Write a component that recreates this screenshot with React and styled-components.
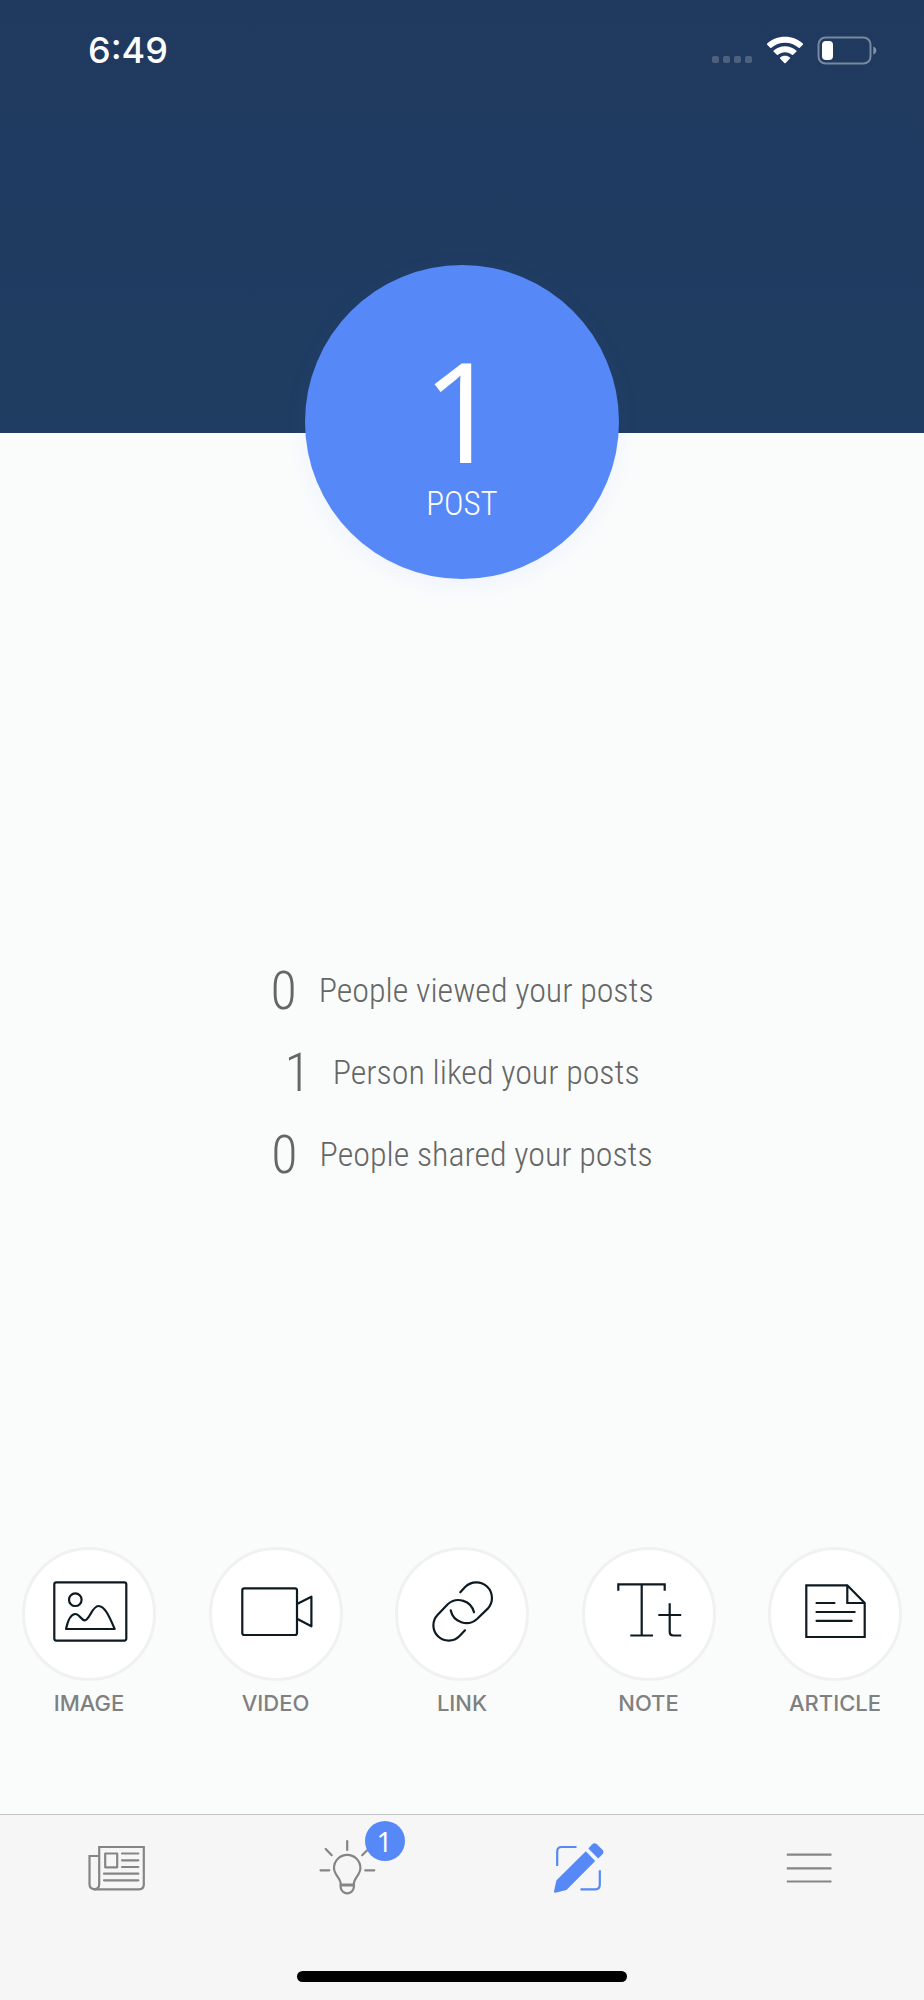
import React from 'react';
import styled, { createGlobalStyle } from 'styled-components';

const GlobalStyle = createGlobalStyle`
    body {
        margin: 0;
        background-color: #fafcfc;
    }
    * {
        box-sizing: border-box;
    }
`;

const Screen = styled.div`
    display: flex;
    flex-direction: column;
    min-height: 100vh;
    font-family: 'Roboto Condensed', 'Open Sans', sans-serif;
    color: #666;
`;

const Header = styled.header`
    height: 433px;
    padding: 30px 46px 0 88px;
    background: linear-gradient(#20395f, #1f3d62);
`;

const StatusBar = styled.div`
    display: flex;
    align-items: center;
    justify-content: space-between;
    height: 40px;
    color: #fff;
`;

const Clock = styled.time`
    font: 500 36px/40px Inter, sans-serif;
`;

const Main = styled.main`
    flex: 1;
    display: flex;
    flex-direction: column;
    align-items: center;
    margin-top: -168px;
`;

const PostCircle = styled.section`
    display: flex;
    flex-direction: column;
    align-items: center;
    width: 314px;
    height: 314px;
    padding-top: 78px;
    border-radius: 50%;
    background-color: #5689f7;
    box-shadow: 0 6px 24px rgba(86, 110, 247, 0.07);
    color: #fff;
`;

const PostCount = styled.strong`
    font: 400 140px/132px 'Open Sans', sans-serif;
`;

const PostLabel = styled.span`
    font-size: 33px;
    font-weight: 300;
    line-height: 58px;
`;

const Stats = styled.ul`
    flex: 1;
    display: flex;
    flex-direction: column;
    justify-content: center;
    margin: 0;
    padding: 18px 0 0;
    list-style: none;
`;

const Stat = styled.li`
    display: flex;
    align-items: center;
    justify-content: center;
    gap: 22px;
    height: 82px;
    font-size: 34px;
    font-weight: 350;
`;

const StatValue = styled.span`
    font-size: 54px;
`;

const Actions = styled.div`
    display: flex;
    justify-content: space-between;
    width: 100%;
    padding: 0 22px 97px;
`;

const Action = styled.button`
    display: flex;
    flex-direction: column;
    align-items: center;
    gap: 8px;
    width: 134px;
    padding: 0;
    border: 0;
    background: none;
    color: #808080;
    font: 500 22px/28px Inter, sans-serif;
    cursor: pointer;
`;

const ActionIcon = styled.span`
    width: 134px;
    height: 134px;
    border: 3px solid #f1f1f1;
    border-radius: 50%;
    background-color: #fff;
    svg {
        display: block;
        fill: none;
        stroke: #0d1a22;
        stroke-width: 2.2;
        stroke-linecap: round;
        stroke-linejoin: round;
    }
`;

const Footer = styled.footer`
    padding-bottom: 18px;
    border-top: 1px solid #c3c5c5;
    background-color: #f6f6f6;
`;

const Tabs = styled.nav`
    display: flex;
    height: 108px;
`;

const Tab = styled.button`
    flex: 1;
    display: flex;
    align-items: center;
    justify-content: center;
    padding: 0;
    border: 0;
    background: none;
    color: ${({ $active }) => ($active ? '#5689f7' : '#858585')};
    cursor: pointer;
`;

const TabIcon = styled.span`
    position: relative;
    width: 64px;
    height: 64px;
    svg {
        display: block;
        fill: none;
        stroke: currentColor;
        stroke-width: 2.2;
        stroke-linecap: round;
        stroke-linejoin: round;
    }
`;

const Badge = styled.span`
    position: absolute;
    top: -16px;
    left: 50px;
    width: 40px;
    height: 40px;
    border-radius: 50%;
    background-color: #5689f7;
    color: #fff;
    font: 400 28px/40px 'Open Sans', sans-serif;
    text-align: center;
`;

const HomeIndicator = styled.div`
    width: 330px;
    height: 11px;
    margin: 48px auto 0;
    border-radius: 6px;
    background-color: #000;
`;

const StatusIcons = () => (
    <svg width="168" height="32" viewBox="710 34 168 32" fill="#fff" aria-hidden="true">
        <g opacity="0.2">
            <rect x="712" y="56" width="7" height="7" rx="2" />
            <rect x="723" y="56" width="7" height="7" rx="2" />
            <rect x="734" y="56" width="7" height="7" rx="2" />
            <rect x="745" y="56" width="7" height="7" rx="2" />
        </g>
        <path d="M785 36.7C792 36.7 798.2 39.3 802.8 43.5Q803.4 44.2 802.8 44.8L799.8 47.8Q799.2 48.3 798.6 47.8C795 44.6 790.3 42.7 785 42.7S775 44.6 771.4 47.8Q770.8 48.3 770.2 47.8L767.2 44.8Q766.6 44.2 767.2 43.5C771.8 39.3 778 36.7 785 36.7Z" />
        <path d="M785 46.2C789.4 46.2 793.3 47.8 796.3 50.5Q796.9 51.1 796.3 51.7L793.1 54.7Q792.5 55.2 791.9 54.7C790 53.1 787.6 52.2 785 52.2S780 53.1 778.1 54.7Q777.5 55.2 776.9 54.7L773.7 51.7Q773.1 51.1 773.7 50.5C776.7 47.8 780.6 46.2 785 46.2Z" />
        <path d="M785 55.7C786.9 55.7 788.6 56.3 789.9 57.4Q790.5 58 789.9 58.6L785.7 63Q785 63.7 784.3 63L780.1 58.6Q779.5 58 780.1 57.4C781.4 56.3 783.1 55.7 785 55.7Z" />
        <rect x="818.5" y="37.5" width="52" height="26" rx="7" fill="none" stroke="#fff" strokeWidth="2" opacity="0.4" />
        <path d="M873.3 46.5C875.3 47.2 876.3 48.7 876.3 50.5S875.3 53.8 873.3 54.5Z" opacity="0.45" />
        <rect x="822" y="41" width="11" height="19" rx="4" />
    </svg>
);

const actions = [
    {
        label: 'IMAGE',
        icon: (
            <>
                <rect x="32.3" y="35.3" width="72" height="58.3" rx="2" />
                <circle cx="53.3" cy="52.7" r="6.3" />
                <path d="M44 82C46 73 49 67 53.3 67C58 67 59 73.3 62.7 73.3C67.5 73.3 70 59 76.5 59C83 59 87.5 70 92.7 82Z" />
            </>
        ),
    },
    {
        label: 'VIDEO',
        icon: (
            <>
                <rect x="33.3" y="41.3" width="54.7" height="46.7" rx="2" />
                <path d="M88 57L102.4 49.7V79.3L88 71.7" />
            </>
        ),
    },
    {
        label: 'LINK',
        icon: (
            <>
                <path d="M65.3 45.3L70.1 40A15 15 0 0 1 92.5 61.9L82 72A16 16 0 0 1 55.7 63.3" />
                <path d="M79 65.3A16 16 0 0 0 53 57L42.7 67.7A15 15 0 0 0 64.6 89L70 83.3" />
            </>
        ),
    },
    {
        label: 'NOTE',
        icon: (
            <>
                <path strokeLinecap="butt" strokeLinejoin="miter" d="M36.3 43.7V37.3H82.7V43.7M59.7 37.3V88.5M48.3 88.5H71" />
                <path strokeLinecap="butt" d="M87.7 56.3V85Q87.7 88.5 91.2 88.5H99.2M76.3 68H99.2" />
            </>
        ),
    },
    {
        label: 'ARTICLE',
        icon: (
            <>
                <path strokeLinejoin="miter" d="M38.3 38.3H79.3L96.7 56V90H38.3ZM79.3 38.3V56H96.7" />
                <path d="M48.5 56H66.5M48.5 65H86.7M48.5 73.8H83.7" />
            </>
        ),
    },
];

const stats = [
    { id: 'views', value: 0, text: 'People viewed your posts' },
    { id: 'likes', value: 1, text: 'Person liked your posts' },
    { id: 'shares', value: 0, text: 'People shared your posts' },
];

const tabs = [
    {
        name: 'News',
        icon: (
            <>
                <path strokeLinejoin="miter" d="M15.2 47V10H59.8V47.5Q59.8 52.3 55 52.3H10.5Q5.5 52 5.5 47V19H15.2" />
                <path d="M15.2 47Q15.2 52 10.5 52.3" />
                <rect x="21.2" y="16.5" width="12" height="13.8" />
                <path d="M38 16.5H54.3M38 23.3H54.3M38 30H54.3M20 36.7H54.3M20 43.3H54.3" />
            </>
        ),
    },
    {
        name: 'Ideas',
        badge: 1,
        icon: (
            <>
                <path d="M25.7 47C25.7 41 19 38 19 31A13.2 13.2 0 0 1 45.4 31C45.4 38 38.8 41 38.8 47V50.5A6.6 6.6 0 0 1 25.7 50.5Z" />
                <path strokeWidth="3" d="M26 48H38.5" />
                <path d="M32.2 4V13M5.5 33.3H14.3M50.2 33.3H59.3M10.7 12L16.7 18.2M53.5 12L47.2 18.2" />
            </>
        ),
    },
    {
        name: 'Compose',
        active: true,
        icon: (
            <>
                <path strokeLinecap="butt" d="M11.2 29V14.5Q11.2 10 15.7 10H30.5M53.8 33.3V47.8Q53.8 52.3 49.3 52.3H34.5" />
                <g fill="currentColor" stroke="none">
                    <path d="M39.8 14.3L49.2 24L20.7 52.7Q20.2 53.1 19.5 53.3L9.3 55.7Q7.7 56 8 54.3L10.2 44.3Q10.3 43.6 10.8 43.1Z" />
                    <path d="M42.3 11.5L46.3 7.3Q48.5 5.3 50.8 7.2L56.5 12.7Q58.5 15 56.5 17.3L52.2 21.5Z" />
                </g>
            </>
        ),
    },
    {
        name: 'Menu',
        icon: <path strokeLinecap="butt" d="M9.8 17.7H54.5M9.8 31.3H54.5M9.8 44.5H54.5" />,
    },
];

const App = () => {
    return (
        <Screen>
            <GlobalStyle />
            <Header>
                <StatusBar>
                    <Clock>6:49</Clock>
                    <StatusIcons />
                </StatusBar>
            </Header>
            <Main>
                <PostCircle>
                    <PostCount>1</PostCount>
                    <PostLabel>POST</PostLabel>
                </PostCircle>
                <Stats>
                    {stats.map(({ id, value, text }) => (
                        <Stat key={id}>
                            <StatValue>{value}</StatValue>
                            <span>{text}</span>
                        </Stat>
                    ))}
                </Stats>
                <Actions>
                    {actions.map(({ label, icon }) => (
                        <Action key={label} type="button">
                            <ActionIcon>
                                <svg width="128" height="128" viewBox="3 3 128 128" aria-hidden="true">
                                    {icon}
                                </svg>
                            </ActionIcon>
                            {label}
                        </Action>
                    ))}
                </Actions>
            </Main>
            <Footer>
                <Tabs>
                    {tabs.map(({ name, icon, badge, active }) => (
                        <Tab key={name} type="button" aria-label={name} $active={active}>
                            <TabIcon>
                                <svg width="64" height="64" viewBox="0 0 64 64" aria-hidden="true">
                                    {icon}
                                </svg>
                                {badge && <Badge>{badge}</Badge>}
                            </TabIcon>
                        </Tab>
                    ))}
                </Tabs>
                <HomeIndicator />
            </Footer>
        </Screen>
    );
};

export default App;
